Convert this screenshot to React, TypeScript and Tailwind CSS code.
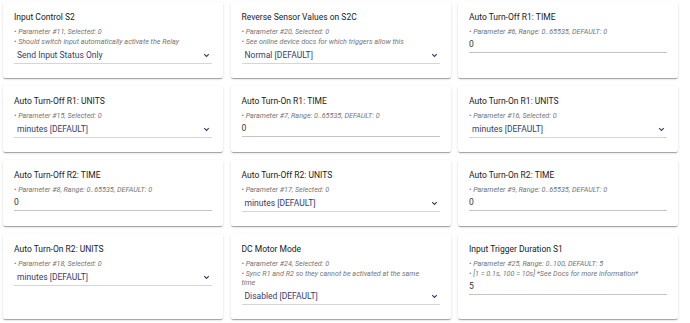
import React from "react";

type Param = {
  title: string;
  notes: string[];
  kind: "select" | "input";
  value: string;
};

const params: Param[] = [
  {
    title: "Input Control S2",
    notes: ["Parameter #11, Selected: 0", "Should switch input automatically activate the Relay"],
    kind: "select",
    value: "Send Input Status Only",
  },
  {
    title: "Reverse Sensor Values on S2C",
    notes: ["Parameter #20, Selected: 0", "See online device docs for which triggers allow this"],
    kind: "select",
    value: "Normal [DEFAULT]",
  },
  {
    title: "Auto Turn-Off R1: TIME",
    notes: ["Parameter #6, Range: 0..65535, DEFAULT: 0"],
    kind: "input",
    value: "0",
  },
  {
    title: "Auto Turn-Off R1: UNITS",
    notes: ["Parameter #15, Selected: 0"],
    kind: "select",
    value: "minutes [DEFAULT]",
  },
  {
    title: "Auto Turn-On R1: TIME",
    notes: ["Parameter #7, Range: 0..65535, DEFAULT: 0"],
    kind: "input",
    value: "0",
  },
  {
    title: "Auto Turn-On R1: UNITS",
    notes: ["Parameter #16, Selected: 0"],
    kind: "select",
    value: "minutes [DEFAULT]",
  },
  {
    title: "Auto Turn-Off R2: TIME",
    notes: ["Parameter #8, Range: 0..65535, DEFAULT: 0"],
    kind: "input",
    value: "0",
  },
  {
    title: "Auto Turn-Off R2: UNITS",
    notes: ["Parameter #17, Selected: 0"],
    kind: "select",
    value: "minutes [DEFAULT]",
  },
  {
    title: "Auto Turn-On R2: TIME",
    notes: ["Parameter #9, Range: 0..65535, DEFAULT: 0"],
    kind: "input",
    value: "0",
  },
  {
    title: "Auto Turn-On R2: UNITS",
    notes: ["Parameter #18, Selected: 0"],
    kind: "select",
    value: "minutes [DEFAULT]",
  },
  {
    title: "DC Motor Mode",
    notes: ["Parameter #24, Selected: 0", "Sync R1 and R2 so they cannot be activated at the same time"],
    kind: "select",
    value: "Disabled [DEFAULT]",
  },
  {
    title: "Input Trigger Duration S1",
    notes: ["Parameter #25, Range: 0..100, DEFAULT: 5", "[1 = 0.1s, 100 = 10s] *See Docs for more information*"],
    kind: "input",
    value: "5",
  },
];

const Chevron = () => (
  <svg width="7" height="5" viewBox="0 0 7 5" className="shrink-0">
    <path d="M1.2 1.2 L3.5 3.5 L5.8 1.2" fill="none" stroke="#34406b" strokeWidth="1.2" />
  </svg>
);

const ParamCard = ({ p }: { p: Param }) => (
  <div className="bg-white rounded-[2px] pt-[8px] pb-[14px] px-[11px] shadow-[0_2px_1px_-1px_rgba(0,0,0,0.2),0_1px_1px_0_rgba(0,0,0,0.14),0_1px_3px_0_rgba(0,0,0,0.12)]">
    <div className="text-[8.5px] leading-[14px] text-[#212121]">{p.title}</div>
    <div className="mt-[2px] pr-[12px]">
      {p.notes.map((n) => (
        <div key={n} className="pt-[1px] text-[7.2px] leading-[9px] italic text-[#757575]">
          • {n}
        </div>
      ))}
    </div>
    {p.kind === "select" ? (
      <div className="mt-[1px] h-[17px] flex items-center justify-between pl-[3px] pr-[2px] border-b border-[#d6d6d6]">
        <span className="text-[8.5px] text-[#34406b]">{p.value}</span>
        <Chevron />
      </div>
    ) : (
      <div className="h-[17px] flex items-center border-b border-[#c4c4c4]">
        <span className="text-[8.5px] text-[#333333]">{p.value}</span>
      </div>
    )}
  </div>
);

export default function App() {
  return (
    <div className="w-[690px] h-[323px] bg-white overflow-hidden font-['Roboto',sans-serif]">
      <div className="grid grid-cols-[220px_220px_220px] gap-x-[7.5px] gap-y-2 pl-[3px] pt-[2px]">
        {params.map((p) => (
          <ParamCard key={p.title} p={p} />
        ))}
      </div>
    </div>
  );
}
